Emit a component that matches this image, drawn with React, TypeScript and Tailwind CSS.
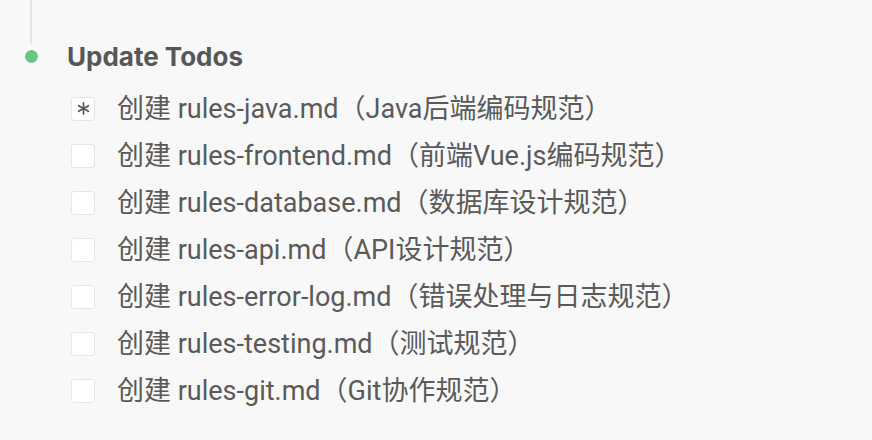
const todos = [
  { text: "创建 rules-java.md（Java后端编码规范）", active: true },
  { text: "创建 rules-frontend.md（前端Vue.js编码规范）", active: false },
  { text: "创建 rules-database.md（数据库设计规范）", active: false },
  { text: "创建 rules-api.md（API设计规范）", active: false },
  { text: "创建 rules-error-log.md（错误处理与日志规范）", active: false },
  { text: "创建 rules-testing.md（测试规范）", active: false },
  { text: "创建 rules-git.md（Git协作规范）", active: false },
];

function Asterisk() {
  return (
    <svg width="13" height="13" viewBox="0 0 14 14" fill="none" stroke="#555" strokeWidth="1.8" strokeLinecap="round">
      <line x1="7" y1="1" x2="7" y2="13" />
      <line x1="1.8" y1="4" x2="12.2" y2="10" />
      <line x1="1.8" y1="10" x2="12.2" y2="4" />
    </svg>
  );
}

export default function App() {
  return (
    <div
      className="w-[872px] h-[440px] bg-[#f8f8f8] text-[#5a5a5a] overflow-hidden"
      style={{ fontFamily: '"Inter", "Noto Sans CJK SC", sans-serif' }}
    >
      <div className="flex">
        <div className="w-[62px] flex flex-col items-center shrink-0">
          <div className="w-[2px] h-[44px] bg-[#e4e4e4]" />
          <div className="mt-[6px] w-[13px] h-[13px] rounded-full bg-[#6cc487]" />
        </div>
        <div className="pl-[5px] pt-[40px] text-[26px] font-bold leading-[34px] text-[#575757]">
          Update Todos
        </div>
      </div>
      <ul className="mt-[11px] pl-[71px] flex flex-col">
        {todos.map((t) => (
          <li key={t.text} className="flex items-center h-[47px]">
            <span className="w-[24px] h-[24px] rounded-[3px] border border-[#e6e6e6] bg-white flex items-center justify-center shrink-0">
              {t.active && <Asterisk />}
            </span>
            <span
              className="ml-[22px] text-[27px] leading-[34px] whitespace-nowrap"
              style={{ fontFamily: 'Roboto, "Noto Sans CJK SC", sans-serif' }}
            >
              {t.text}
            </span>
          </li>
        ))}
      </ul>
    </div>
  );
}
